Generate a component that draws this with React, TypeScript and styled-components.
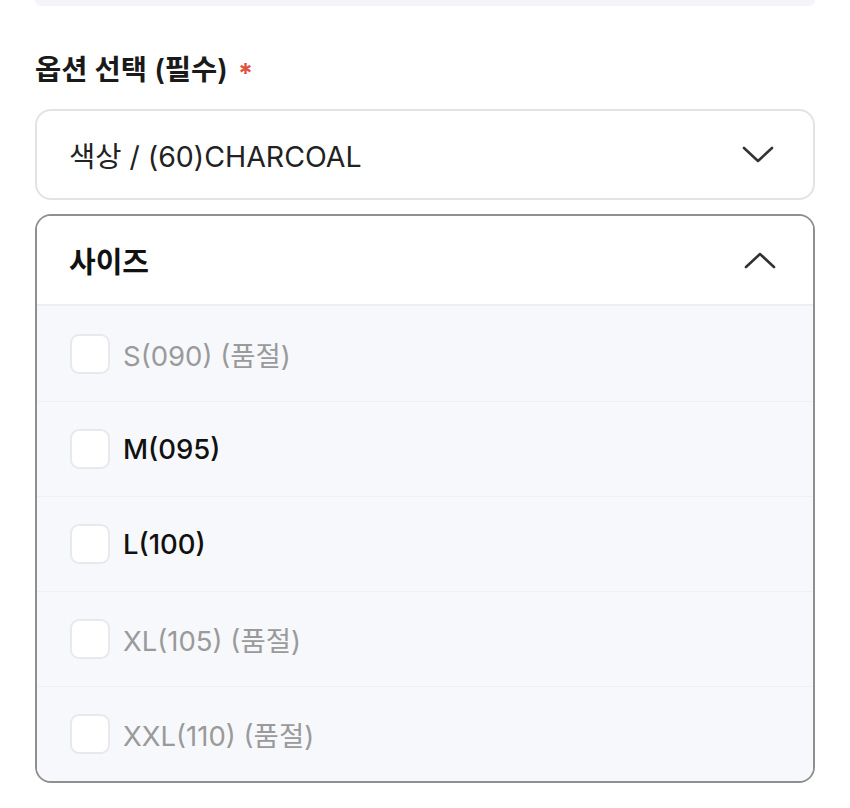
import React from 'react';
import styled, { createGlobalStyle } from 'styled-components';

const GlobalStyle = createGlobalStyle`
  * { box-sizing: border-box; }
  body {
    margin: 0;
    background: #fff;
    font-family: 'Inter', 'Noto Sans CJK KR', sans-serif;
    color: #111;
  }
`;

const Page = styled.div`
  padding: 0 35px;
`;

const TopEdge = styled.div`
  height: 6px;
  background: #f4f5f8;
  border-radius: 0 0 14px 14px;
`;

const Label = styled.h2`
  margin: 47px 0 22px;
  font-size: 28.5px;
  font-weight: 600;
  line-height: 34px;
  color: #1a1a1a;
  display: flex;
  align-items: center;
  gap: 10px;
`;

const Required = styled.span`
  color: #e0523e;
  font-size: 27px;
  font-weight: 700;
  line-height: 1;
  margin-top: 6px;
`;

const SelectBox = styled.div`
  height: 91px;
  border: 2px solid #e2e3e5;
  border-radius: 16px;
  display: flex;
  align-items: center;
  justify-content: space-between;
  padding: 0 38px 0 32px;
  font-size: 28.5px;
  color: #222;
`;

const Panel = styled.div`
  margin-top: 14px;
  border: 2px solid #8f8f8f;
  border-radius: 16px;
  overflow: hidden;
`;

const PanelHeader = styled.div`
  height: 90px;
  display: flex;
  align-items: center;
  justify-content: space-between;
  padding: 0 36px 0 32px;
  font-size: 29px;
  font-weight: 700;
  background: #fff;
  border-bottom: 2px solid #eceef2;
`;

const List = styled.ul`
  margin: 0;
  padding: 0;
  list-style: none;
  background: #f7f8fb;
`;

const Row = styled.li<{ $disabled?: boolean }>`
  height: 95px;
  display: flex;
  align-items: center;
  gap: 13px;
  padding-left: 33px;
  font-size: 27.5px;
  font-weight: ${(p) => (p.$disabled ? 400 : 500)};
  color: ${(p) => (p.$disabled ? '#9a9a9a' : '#111')};
  & + & {
    border-top: 1px solid #eef0f3;
  }
`;

const Check = styled.span`
  width: 40px;
  height: 40px;
  border: 2px solid #e8e9eb;
  border-radius: 9px;
  background: #fff;
  flex: none;
`;

const Chevron = ({ up }: { up?: boolean }) => (
  <svg width="34" height="20" viewBox="0 0 34 20" fill="none">
    <path
      d={up ? 'M3 17L17 4L31 17' : 'M3 3L17 16L31 3'}
      stroke="#333"
      strokeWidth="2.6"
      strokeLinecap="round"
      strokeLinejoin="round"
    />
  </svg>
);

const sizes = [
  { name: 'S(090) (품절)', soldOut: true },
  { name: 'M(095)', soldOut: false },
  { name: 'L(100)', soldOut: false },
  { name: 'XL(105) (품절)', soldOut: true },
  { name: 'XXL(110) (품절)', soldOut: true },
];

export default function App() {
  return (
    <Page>
      <GlobalStyle />
      <TopEdge />
      <Label>
        옵션 선택 (필수) <Required>*</Required>
      </Label>
      <SelectBox>
        색상 / (60)CHARCOAL
        <Chevron />
      </SelectBox>
      <Panel>
        <PanelHeader>
          사이즈
          <Chevron up />
        </PanelHeader>
        <List>
          {sizes.map((s) => (
            <Row key={s.name} $disabled={s.soldOut}>
              <Check />
              {s.name}
            </Row>
          ))}
        </List>
      </Panel>
    </Page>
  );
}
